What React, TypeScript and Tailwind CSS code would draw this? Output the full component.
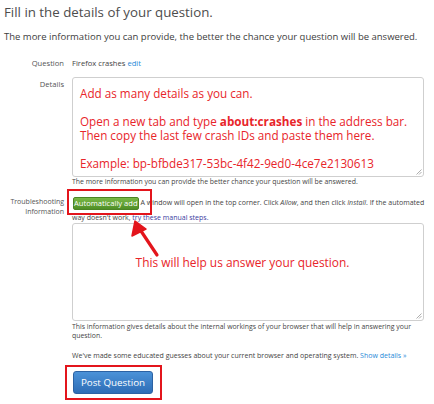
import React from "react";

const Handle = () => (
    <svg className="absolute right-[1px] bottom-[1px]" width="7" height="7" viewBox="0 0 7 7">
        <path d="M6.5 1.5 L1.5 6.5 M6.5 4 L4 6.5" stroke="#999" strokeWidth="0.8" />
    </svg>
);

const App = () => {
    return (
        <div className="relative w-[434px] h-[404px] overflow-hidden bg-white font-['Open_Sans',sans-serif] text-[#333]">
            <div className="px-[4px] pt-[2px]">
                <h1 className="text-[13.3px] leading-[20px] text-[#4d4d4d] whitespace-nowrap">Fill in the details of your question.</h1>
                <p className="mt-[9px] text-[9.5px] leading-[12px] text-[#3d3d3d] whitespace-nowrap">
                    The more information you can provide, the better the chance your question will be answered.
                </p>
            </div>

            <div className="mt-[15px] grid grid-cols-[64px_352px] gap-x-[8px] text-[7.6px] leading-[10px]">
                <div className="text-right text-[#555]">Question</div>
                <div className="text-[#444]">
                    Firefox crashes <span className="text-[#1f8ad8]">edit</span>
                </div>

                <div className="mt-[10px] pt-[1px] text-right text-[#555]">Details</div>
                <div className="mt-[9px]">
                    <div className="relative h-[100px] rounded-[3px] border border-[#cfcfcf] px-[7px] pt-[8px] text-[11.7px] leading-[14px] text-[#e8252a] whitespace-nowrap">
                        <div>Add as many details as you can.</div>
                        <div className="h-[14px]" />
                        <div>
                            Open a new tab and type <b>about:crashes</b> in the address bar.
                        </div>
                        <div>Then copy the last few crash IDs and paste them here.</div>
                        <div className="h-[14px]" />
                        <div>Example: bp-bfbde317-53bc-4f42-9ed0-4ce7e2130613</div>
                        <Handle />
                    </div>
                    <div className="text-[6.9px] leading-[10px] text-[#444] whitespace-nowrap">
                        The more information you can provide the better chance your question will be answered.
                    </div>
                </div>

                <div className="mt-[10px] text-right text-[7px] text-[#555] leading-[9.5px]">
                    Troubleshooting
                    <br />
                    Information
                </div>
                <div className="mt-[9px]">
                    <div className="flex h-[14px] items-center gap-[2px] whitespace-nowrap text-[7px] text-[#444]">
                        <div className="ml-[1px] flex h-[13px] w-[73px] items-center justify-center rounded-[2px] border border-[#4b8424] bg-gradient-to-b from-[#79b845] to-[#4f8f26] text-[7.6px] text-white">
                            Automatically add
                        </div>
                        <span>
                            A window will open in the top corner. Click <i>Allow</i>, and then click <i>Install</i>. If the automated
                        </span>
                    </div>
                    <div className="mt-[3px] text-[7px] leading-[10px] text-[#444] whitespace-nowrap">
                        way doesn't work, <span className="text-[#3a3ba0]">try these manual steps.</span>
                    </div>
                    <div className="relative flex h-[98px] justify-center rounded-[3px] border border-[#cfcfcf] pt-[31px] pr-[11px] text-[11.9px] leading-[14px] text-[#e8252a]">
                        <span className="whitespace-nowrap">This will help us answer your question.</span>
                        <Handle />
                    </div>
                    <div className="mt-[1px] text-[6.9px] leading-[9px] text-[#444] whitespace-nowrap">
                        This information gives details about the internal workings of your browser that will help in answering your
                        <br />
                        question.
                    </div>
                    <div className="mt-[11px] text-[7px] leading-[10px] text-[#444] whitespace-nowrap">
                        We've made some educated guesses about your current browser and operating system.{" "}
                        <span className="text-[#1f8ad8]">Show details »</span>
                    </div>
                    <div className="mt-[10px] ml-[1px] flex h-[23px] w-[80px] items-center justify-center rounded-[3px] border border-[#2c62a3] bg-gradient-to-b from-[#4b92d8] to-[#2e6db6] text-[9.8px] text-white">
                        Post Question
                    </div>
                </div>
            </div>

            {/* annotation overlays */}
            <div className="absolute left-[67px] top-[189px] h-[26px] w-[85px] border-[2.5px] border-[#e3151c]" />
            <div className="absolute left-[65px] top-[365px] h-[35px] w-[97px] border-[2.5px] border-[#e3151c]" />
            <svg className="absolute left-0 top-0" width="434" height="404" viewBox="0 0 434 404">
                <path d="M157 255 L139 228" stroke="#e3151c" strokeWidth="3.2" strokeLinecap="round" />
                <path d="M135 221 L132 236 L146 229 Z" fill="#e3151c" stroke="#e3151c" strokeWidth="1.5" strokeLinejoin="round" />
            </svg>
        </div>
    );
};

export default App;
